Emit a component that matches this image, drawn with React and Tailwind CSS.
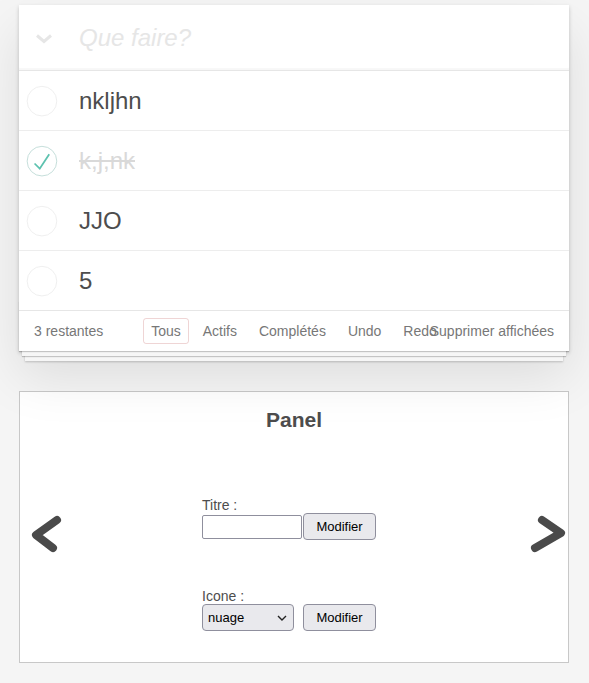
import { useState } from 'react'

const todos = [
  { id: 1, title: 'nkljhn', done: false },
  { id: 2, title: 'k,j,nk', done: true },
  { id: 3, title: 'JJO', done: false },
  { id: 4, title: '5', done: false },
]

const filters = ['Tous', 'Actifs', 'Complétés', 'Undo', 'Redo']

function Toggle({ done }) {
  return (
    <svg width="40" height="40" viewBox="-10 -18 100 135" className="shrink-0">
      <circle cx="50" cy="50" r="50" fill="none" stroke={done ? '#bddad5' : '#ededed'} strokeWidth="3" />
      {done && <path fill="#5dc2af" d="M72 25L42 71 27 56l-4 4 20 20 34-52z" />}
    </svg>
  )
}

function TodoRow({ todo, last }) {
  return (
    <li className={`flex items-center ${last ? 'h-[59px]' : 'h-[60px] border-b border-[#ededed]'}`}>
      <Toggle done={todo.done} />
      <label
        className={`pl-[20px] text-[24px] leading-[29px] ${
          todo.done ? 'text-[#d9d9d9] line-through' : 'text-[#4d4d4d]'
        }`}
      >
        {todo.title}
      </label>
    </li>
  )
}

function TodoApp() {
  const [text, setText] = useState('')
  const remaining = todos.filter((t) => !t.done).length

  return (
    <section className="relative ml-[19px] w-[550px] bg-white shadow-[0_2px_4px_0_rgba(0,0,0,0.2),0_25px_50px_0_rgba(0,0,0,0.1)]">
      {/* header */}
      <header className="flex h-[65px] items-center shadow-[inset_0_-2px_1px_rgba(0,0,0,0.03)]">
        <div className="flex w-[60px] shrink-0 pl-[16px] pt-[2px]">
          <svg width="18" height="11" viewBox="0 0 18 11">
            <path d="M2 2.5l7 6 7-6" fill="none" stroke="#e6e6e6" strokeWidth="3" />
          </svg>
        </div>
        <input
          value={text}
          onChange={(e) => setText(e.target.value)}
          placeholder="Que faire?"
          className="h-full flex-1 pr-[16px] text-[24px] text-[#4d4d4d] outline-none placeholder:italic placeholder:text-[#e6e6e6]"
        />
      </header>

      <ul className="border-t border-[#e6e6e6]">
        {todos.map((t, i) => (
          <TodoRow key={t.id} todo={t} last={i === todos.length - 1} />
        ))}
      </ul>

      {/* footer */}
      <footer className="relative flex h-[41px] items-center justify-between border-t border-[#e6e6e6] px-[15px] text-[14px] leading-[20px] text-[#777]">
        <div className="pointer-events-none absolute inset-x-0 bottom-0 h-[50px] overflow-hidden shadow-[0_1px_1px_rgba(0,0,0,0.2),0_8px_0_-3px_#f6f6f6,0_9px_1px_-3px_rgba(0,0,0,0.2),0_16px_0_-6px_#f6f6f6,0_17px_2px_-6px_rgba(0,0,0,0.2)]" />
        <span className="relative">{remaining} restantes</span>
        <ul className="absolute inset-x-0 flex justify-center">
          {filters.map((f, i) => (
            <li key={f}>
              <a
                className={`mx-[3px] block rounded-[3px] border px-[7px] py-[2px] ${
                  i === 0 ? 'border-[rgba(175,47,47,0.2)]' : 'border-transparent'
                }`}
              >
                {f}
              </a>
            </li>
          ))}
        </ul>
        <button className="relative">Supprimer affichées</button>
      </footer>
    </section>
  )
}

function Panel() {
  return (
    <div className="ml-[19px] mt-[40px] h-[272px] w-[550px] border border-[#c8c8c8] bg-white">
      <h2 className="pt-[16px] text-center text-[21px] font-bold leading-[24px] text-[#4d4d4d]">Panel</h2>
      <div className="flex items-start">
        <svg width="34" height="40" viewBox="0 0 34 40" className="ml-[8px] mt-[82px] shrink-0">
          <path d="M29 6L8 21l17 13" fill="none" stroke="#4a4a4a" strokeWidth="8" strokeLinecap="round" strokeLinejoin="round" />
        </svg>

        <div className="ml-[140px] w-[176px] text-[14px] leading-[16px] text-[#4d4d4d]">
          <div className="mt-[65px]">Titre :</div>
          <div className="flex items-center">
            <input className="h-[24px] w-[100px] rounded-[2px] border border-[#8f8f9d] bg-white px-[3px] text-[13px]" />
            <button className="ml-[1px] h-[27px] w-[73px] rounded-[4px] border border-[#8f8f9d] bg-[#e9e9ed] text-[13px] text-black">
              Modifier
            </button>
          </div>

          <div className="mt-[48px]">Icone :</div>
          <div className="flex items-center">
            <div className="relative">
              <select className="h-[27px] w-[92px] appearance-none rounded-[4px] border border-[#8f8f9d] bg-[#e9e9ed] pl-[5px] text-[13px] text-black outline-none">
                <option>nuage</option>
                <option>soleil</option>
                <option>pluie</option>
              </select>
              <svg width="10" height="6" viewBox="0 0 10 6" className="pointer-events-none absolute right-[7px] top-[11px]">
                <path d="M1 1l4 4 4-4" fill="none" stroke="#222" strokeWidth="1.4" />
              </svg>
            </div>
            <button className="ml-[9px] h-[27px] w-[73px] rounded-[4px] border border-[#8f8f9d] bg-[#e9e9ed] text-[13px] text-black">
              Modifier
            </button>
          </div>
        </div>

        <svg width="40" height="42" viewBox="0 0 40 42" className="ml-auto mt-[80px] shrink-0">
          <path d="M14 8l19 13-26 15" fill="none" stroke="#4a4a4a" strokeWidth="8" strokeLinecap="round" strokeLinejoin="round" />
        </svg>
      </div>
    </div>
  )
}

export default function App() {
  return (
    <div className="min-h-screen bg-[#f5f5f5] pt-[5px] font-['Liberation_Sans',Arial,sans-serif]">
      <TodoApp />
      <Panel />
    </div>
  )
}
